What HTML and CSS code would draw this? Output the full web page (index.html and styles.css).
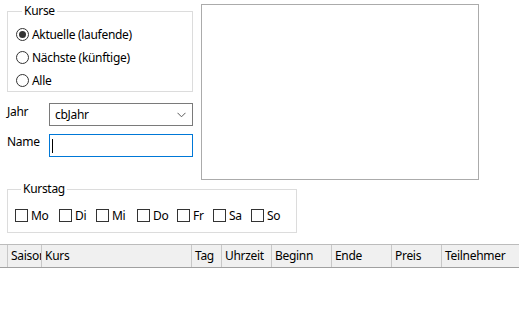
FILE: index.html
```html
<!DOCTYPE html>
<html>
<head>
  <meta charset="UTF-8">
  <title>Kurse</title>
  <link rel="stylesheet" href="styles.css">
</head>
<body>
  <div class="top">
    <div class="left">
      <fieldset class="group kurse">
        <legend>Kurse</legend>
        <label class="opt"><span class="radio on"></span>Aktuelle (laufende)</label>
        <label class="opt"><span class="radio"></span>Nächste (künftige)</label>
        <label class="opt"><span class="radio"></span>Alle</label>
      </fieldset>
      <div class="field jahr">
        <span class="lbl">Jahr</span>
        <div class="combo">
          <span>cbJahr</span>
          <svg width="9" height="6" viewBox="0 0 9 6"><path d="M0.5 0.8 L4.5 4.8 L8.5 0.8" fill="none" stroke="#5a5a5a" stroke-width="1"/></svg>
        </div>
      </div>
      <div class="field name">
        <span class="lbl">Name</span>
        <div class="textbox"><span class="caret"></span></div>
      </div>
    </div>
    <div class="listbox"></div>
  </div>

  <fieldset class="group kurstag">
    <legend>Kurstag</legend>
    <div class="days">
      <label class="day w44"><span class="check"></span>Mo</label>
      <label class="day w37"><span class="check"></span>Di</label>
      <label class="day w41"><span class="check"></span>Mi</label>
      <label class="day w40"><span class="check"></span>Do</label>
      <label class="day w36"><span class="check"></span>Fr</label>
      <label class="day w38"><span class="check"></span>Sa</label>
      <label class="day"><span class="check"></span>So</label>
    </div>
  </fieldset>

  <div class="grid">
    <div class="head">
      <div class="col c0"></div>
      <div class="col c1">Saison</div>
      <div class="col c2">Kurs</div>
      <div class="col c3">Tag</div>
      <div class="col c4">Uhrzeit</div>
      <div class="col c5">Beginn</div>
      <div class="col c6">Ende</div>
      <div class="col c7">Preis</div>
      <div class="col c8">Teilnehmer</div>
    </div>
  </div>
</body>
</html>
```

FILE: styles.css
```css
body {
  margin: 0;
  background: #fff;
  color: #000;
  font-family: "Noto Sans", "Liberation Sans", sans-serif;
  font-size: 12px;
  line-height: 16px;
  letter-spacing: -0.3px;
  width: 519px;
  height: 328px;
  overflow: hidden;
}

.top {
  display: flex;
  align-items: flex-start;
  padding: 3px 0 0 7px;
}

.left {
  width: 186px;
}

/* group boxes */
.group {
  margin: 0;
  border: 1px solid #dcdcdc;
  padding: 0;
  box-sizing: border-box;
}
.group legend {
  margin-left: 6px;
  padding: 0 2px;
  line-height: 16px;
}

.kurse {
  width: 186px;
  height: 89px;
  padding: 4px 0 0 8px;
}
.opt {
  display: flex;
  align-items: center;
  height: 23px;
}
.radio {
  width: 11px;
  height: 11px;
  border: 1px solid #333;
  border-radius: 50%;
  margin-right: 3px;
  display: flex;
  align-items: center;
  justify-content: center;
}
.radio.on::after {
  content: "";
  width: 7px;
  height: 7px;
  border-radius: 50%;
  background: #333;
}

/* Jahr / Name */
.field {
  display: flex;
  align-items: flex-start;
}
.jahr {
  margin-top: 11px;
}
.name {
  margin-top: 8px;
}
.lbl {
  width: 42px;
  padding-top: 1px;
}
.name .lbl {
  padding-top: 0;
}
.combo, .textbox {
  width: 144px;
  height: 23px;
  box-sizing: border-box;
  display: flex;
  align-items: center;
}
.combo {
  border: 1px solid #7a7a7a;
  padding: 0 6px 0 5px;
  justify-content: space-between;
}
.textbox {
  border: 1px solid #0078d7;
  padding-left: 2px;
}
.caret {
  width: 1px;
  height: 14px;
  background: #000;
}

.listbox {
  margin: 1px 0 0 8px;
  width: 278px;
  height: 176px;
  box-sizing: border-box;
  border: 1px solid #ababab;
}

/* Kurstag */
.kurstag {
  margin: 1px 0 0 7px;
  width: 290px;
  height: 52px;
  padding: 8px 0 0 7px;
}
.days {
  display: flex;
  height: 21px;
}
.day {
  display: flex;
  align-items: center;
}
.check {
  width: 11px;
  height: 11px;
  border: 1px solid #333;
  margin-right: 3px;
}
.w44 { width: 44px; }
.w37 { width: 37px; }
.w41 { width: 41px; }
.w40 { width: 40px; }
.w36 { width: 36px; }
.w38 { width: 38px; }

/* list view */
.grid {
  margin-top: 11px;
  border-top: 1px solid #bcbcbc;
}
.head {
  display: flex;
  height: 23px;
  box-sizing: border-box;
  background: #f0f0f0;
  border-bottom: 1px solid #a0a0a0;
}
.col {
  box-sizing: border-box;
  border-right: 1px solid #c8c8c8;
  padding: 3px 0 0 3px;
  white-space: nowrap;
  overflow: hidden;
}
.c0 { width: 8px; padding: 0; }
.c1 { width: 34px; }
.c2 { width: 150px; }
.c3 { width: 30px; }
.c4 { width: 50px; }
.c5 { width: 60px; }
.c6 { width: 60px; }
.c7 { width: 50px; }
.c8 { flex: 1; border-right: none; }
```
